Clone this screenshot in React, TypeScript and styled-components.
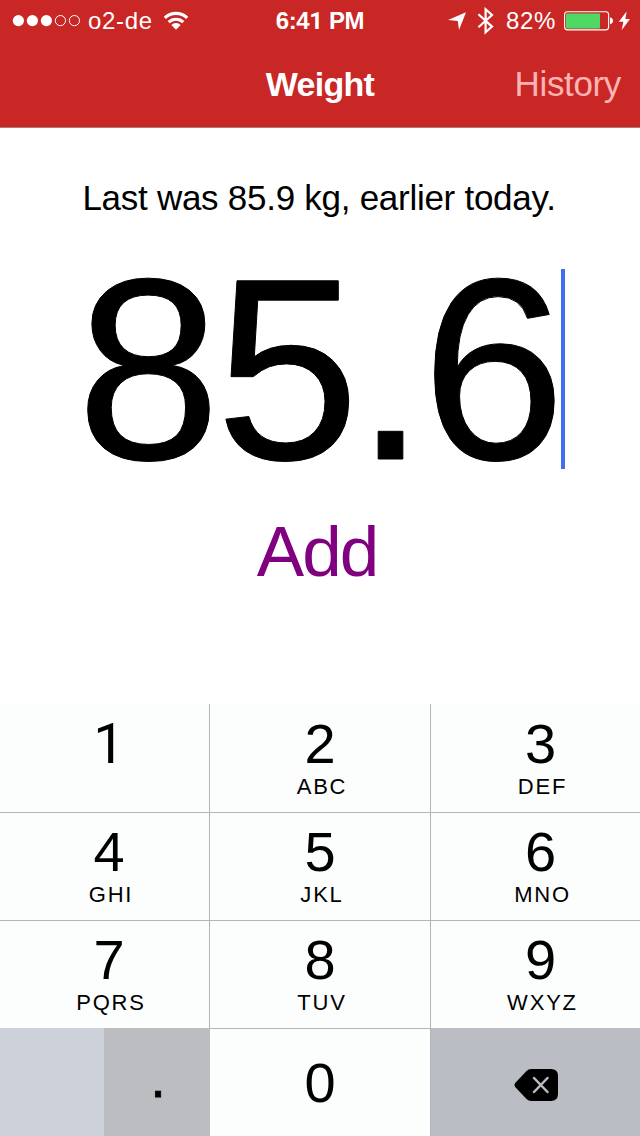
import React from "react";
import styled, { createGlobalStyle } from "styled-components";

const GlobalStyle = createGlobalStyle`
  *, *::before, *::after { box-sizing: border-box; }
  body { margin: 0; background: #fff; font-family: "Liberation Sans", Arial, sans-serif; }
`;

const Screen = styled.div`
  display: flex;
  flex-direction: column;
  width: 640px;
  height: 1136px;
  overflow: hidden;
  background: #fff;
  color: #000;
`;

const Header = styled.header`
  height: 128px;
  background: #c92626;
  border-bottom: 1px solid #b07a78;
  color: #fff;
`;

const StatusBar = styled.div`
  display: grid;
  grid-template-columns: 240px 160px 240px;
  height: 41px;
  font-size: 24px;
  line-height: 41px;
  white-space: nowrap;
  svg { display: block; flex: none; }
`;

const Carrier = styled.div`
  display: flex;
  align-items: center;
  padding-left: 12px;
`;

const CarrierName = styled.span`
  margin: 0 10.500px 0 7px;
  padding-bottom: 2px;
  line-height: 39px;
  letter-spacing: 0.65px;
`;

const Clock = styled.div`
  text-align: center;
  font-weight: 700;
  font-size: 24px;
  letter-spacing: -0.4px;
`;

const PlainOne = styled.span<{ $weight: number }>`
  font-family: Roboto, sans-serif;
  font-weight: ${(p) => p.$weight};
`;

const Indicators = styled.div`
  display: flex;
  align-items: center;
  padding-left: 48px;
`;

const Percent = styled.span`
  margin: 0 8px 0 12px;
  padding-bottom: 2px;
  line-height: 39px;
  letter-spacing: 0.6px;
`;

const NavBar = styled.nav`
  display: grid;
  grid-template-columns: 1fr auto 1fr;
  height: 86px;
  font-size: 35px;
  line-height: 86px;
`;

const Title = styled.h1`
  grid-column: 2;
  margin: 0;
  font-size: 34px;
  font-weight: 700;
  letter-spacing: -0.7px;
`;

const NavLink = styled.span`
  padding-right: 19px;
  text-align: right;
  color: #ffb4b4;
  letter-spacing: -0.35px;
`;

const Content = styled.main`
  display: flex;
  flex-direction: column;
  align-items: center;
  height: 576px;
  padding-top: 50px;
`;

const LastEntry = styled.p`
  margin: 0;
  padding-right: 2px;
  font-size: 35px;
  line-height: 40px;
  letter-spacing: -0.27px;
`;

const WeightField = styled.div`
  display: flex;
  align-items: center;
  height: 200px;
  margin-top: 51px;
  padding-left: 1px;
  font-size: 259px;
  line-height: 200px;
  letter-spacing: -5px;
`;

const WeightValue = styled.span`
  padding-top: 2px;
  -webkit-text-stroke: 1px #000;
`;

const Caret = styled.span`
  width: 4px;
  height: 200px;
  background: #426df5;
`;

const AddButton = styled.button`
  height: 80px;
  margin-top: 43px;
  padding: 0 6px 0 0;
  border: 0;
  background: none;
  color: #800080;
  font: 71px/80px "Liberation Sans", Arial, sans-serif;
  letter-spacing: -2px;
`;

const Keypad = styled.div`
  display: grid;
  grid-template-columns: 210px 221px 209px;
  grid-template-rows: repeat(4, 108px);
  height: 432px;
`;

const Key = styled.div<{ $col: number; $ruled?: boolean; $bottom?: boolean }>`
  display: flex;
  flex-direction: column;
  align-items: center;
  padding-left: ${(p) => [9, 0, 10][p.$col]}px;
  padding-top: ${(p) => (p.$bottom ? 15 : 0)}px;
  background: #fcfdfd;
  border-right: ${(p) => (p.$col < 2 ? "1px solid #b1b4b8" : "0")};
  box-shadow: ${(p) => (p.$ruled ? "inset 0 1px #b1b4b8" : "none")};
`;

const Digit = styled.span`
  height: 70px;
  font-size: 56px;
  line-height: 80px;
`;

const Letters = styled.span`
  height: 26px;
  padding-left: 4px;
  font-size: 22px;
  line-height: 26px;
  letter-spacing: 1.8px;
`;

const SplitKey = styled.div`
  display: grid;
  grid-template-columns: 104px 106px;
`;

const BlankKey = styled.div`
  background: #cdd1d9;
`;

const PointKey = styled.div`
  padding-left: 2px;
  background: #bbbdc1;
  text-align: center;
  font-size: 56px;
  line-height: 99px;
  -webkit-text-stroke: 0.8px #000;
`;

const DeleteKey = styled.div`
  display: flex;
  align-items: center;
  padding: 6px 0 0 82px;
  background: #babec4;
`;

const SignalDots = () => (
  <svg width="69" height="14" viewBox="0 0 69 14">
    {[0, 1, 2, 3, 4].map((i) => (
      <circle
        key={i}
        cx={6.4 + i * 14}
        cy="6.6"
        r={i < 3 ? 5.6 : 5.1}
        fill={i < 3 ? "#fff" : "none"}
        stroke={i < 3 ? "none" : "#fff"}
        strokeWidth="1"
      />
    ))}
  </svg>
);

const Wifi = () => (
  <svg width="26" height="20" viewBox="0 0 26 20">
    <g fill="none" stroke="#fff" strokeWidth="3.1">
      <path d="M1.800 6.900a16.200 16.200 0 0 1 22.400 0" />
      <path d="M5.700 11.200a10.500 10.500 0 0 1 14.600 0" />
    </g>
    <path d="M8.300 14a6.800 6.800 0 0 1 9.400 0L13 18.700z" fill="#fff" />
  </svg>
);

const LocationArrow = () => (
  <svg width="18" height="20" viewBox="0 0 18 20">
    <path d="M18 1.200L11 19 9.800 10 0 9z" fill="#fff" />
  </svg>
);

const BluetoothMark = styled.svg`
  margin-left: 11px;
`;

const Bluetooth = () => (
  <BluetoothMark width="17" height="28" viewBox="0 0 17 28">
    <path
      d="M1.400 7.200L15 19.600 8.600 25.300V2.300L15 8 1.400 20.200"
      fill="none"
      stroke="#fff"
      strokeWidth="2.200"
    />
  </BluetoothMark>
);

const Battery = () => (
  <svg width="50" height="20" viewBox="0 0 50 20">
    <rect x="0.6" y="0.7" width="44" height="18.2" rx="2.8" fill="none" stroke="#fff" strokeWidth="1.1" />
    <rect x="2" y="2.4" width="34" height="15" rx="1" fill="#4fd964" />
    <path d="M46 6.400c1.900.2 3 1.600 3 3.400s-1.100 3.300-3 3.500z" fill="#fff" />
  </svg>
);

const BoltMark = styled.svg`
  margin-left: 4px;
`;

const Bolt = () => (
  <BoltMark width="13" height="20" viewBox="0 0 13 20">
    <path d="M8.600 0.500L0.800 10.800h4.600L3.600 19.300 12 7.900H7.400z" fill="#fff" />
  </BoltMark>
);

const Backspace = () => (
  <svg width="46" height="34" viewBox="0 0 46 34">
    <path
      d="M18 1H38Q45 1 45 8V26Q45 33 38 33H18Q15.600 33 13.500 31L2.200 19Q.5 17 2.200 15L13.500 3Q15.600 1 18 1z"
      fill="#000"
    />
    <path d="M21 10L34.500 24M34.500 10L21 24" stroke="#babec4" strokeWidth="2.500" strokeLinecap="round" />
  </svg>
);

const keys: [string, string][] = [
  ["1", ""],
  ["2", "ABC"],
  ["3", "DEF"],
  ["4", "GHI"],
  ["5", "JKL"],
  ["6", "MNO"],
  ["7", "PQRS"],
  ["8", "TUV"],
  ["9", "WXYZ"],
];

export default function App() {
  return (
    <>
      <GlobalStyle />
      <Screen>
        <Header>
          <StatusBar>
            <Carrier>
              <SignalDots />
              <CarrierName>o2-de</CarrierName>
              <Wifi />
            </Carrier>
            <Clock>
              6:4<PlainOne $weight={700}>1</PlainOne> PM
            </Clock>
            <Indicators>
              <LocationArrow />
              <Bluetooth />
              <Percent>82%</Percent>
              <Battery />
              <Bolt />
            </Indicators>
          </StatusBar>
          <NavBar>
            <Title>Weight</Title>
            <NavLink>History</NavLink>
          </NavBar>
        </Header>
        <Content>
          <LastEntry>Last was 85.9 kg, earlier today.</LastEntry>
          <WeightField>
            <WeightValue>85.6</WeightValue>
            <Caret />
          </WeightField>
          <AddButton>Add</AddButton>
        </Content>
        <Keypad>
          {keys.map(([digit, letters], i) => (
            <Key key={digit} $col={i % 3} $ruled={i > 2}>
              <Digit>{digit === "1" ? <PlainOne $weight={400}>1</PlainOne> : digit}</Digit>
              <Letters>{letters}</Letters>
            </Key>
          ))}
          <SplitKey>
            <BlankKey />
            <PointKey>.</PointKey>
          </SplitKey>
          <Key $col={1} $ruled $bottom>
            <Digit>0</Digit>
          </Key>
          <DeleteKey>
            <Backspace />
          </DeleteKey>
        </Keypad>
      </Screen>
    </>
  );
}
